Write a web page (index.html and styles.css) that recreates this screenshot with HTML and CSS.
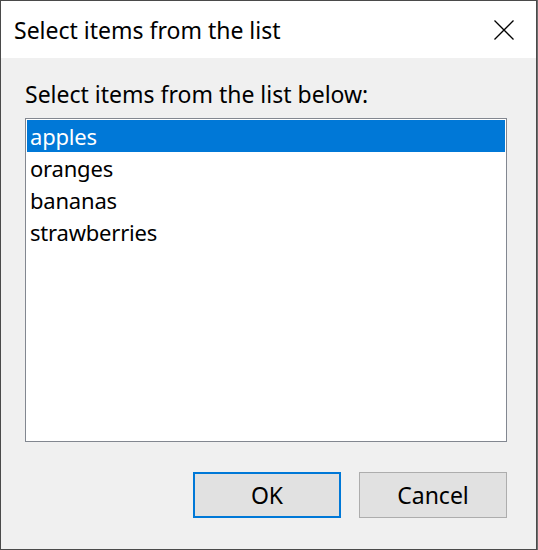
FILE: index.html
```html
<!DOCTYPE html>
<html>
<head>
<meta charset="utf-8">
<link rel="stylesheet" href="styles.css">
</head>
<body>
<div class="window">
  <div class="titlebar">
    <span class="title">Select items from the list</span>
    <span class="close">
      <svg width="20" height="20" viewBox="0 0 20 20"><path d="M0.5 0.5 L19.5 19.5 M19.5 0.5 L0.5 19.5" stroke="#000" stroke-width="1.3" fill="none"/></svg>
    </span>
  </div>
  <div class="content">
    <div class="label">Select items from the list below:</div>
    <div class="listbox">
      <div class="item selected">apples</div>
      <div class="item">oranges</div>
      <div class="item">bananas</div>
      <div class="item">strawberries</div>
    </div>
    <div class="buttons">
      <button class="btn default">OK</button>
      <button class="btn">Cancel</button>
    </div>
  </div>
</div>
</body>
</html>
```

FILE: styles.css
```css
html, body {
  margin: 0;
  padding: 0;
}
body {
  width: 538px;
  height: 550px;
  background: #6e6e6e;
  font-family: "Noto Sans", "Open Sans", sans-serif;
  color: #000;
}
.window {
  box-sizing: border-box;
  width: 537px;
  height: 550px;
  border: 1px solid #4a4a4a;
  background: #f0f0f0;
  display: flex;
  flex-direction: column;
}
.titlebar {
  height: 57px;
  background: #fff;
  display: flex;
  align-items: center;
  justify-content: space-between;
  padding: 0 22px 0 13px;
}
.title {
  font-size: 23px;
  line-height: 30px;
}
.close {
  display: flex;
  width: 20px;
  height: 20px;
}
.content {
  padding: 21px 0 0 24px;
}
.label {
  font-size: 23px;
  line-height: 30px;
  height: 39px;
}
.listbox {
  box-sizing: border-box;
  width: 482px;
  height: 324px;
  border: 1px solid #828790;
  background: #fff;
  padding: 1px;
}
.item {
  height: 32px;
  line-height: 32px;
  padding-left: 3px;
  font-size: 22px;
  letter-spacing: -0.2px;
}
.item.selected {
  background: #0078d7;
  color: #fff;
}
.buttons {
  width: 482px;
  display: flex;
  justify-content: flex-end;
  gap: 18px;
  margin-top: 30px;
}
.btn {
  box-sizing: border-box;
  width: 148px;
  height: 46px;
  background: #e1e1e1;
  border: 1px solid #adadad;
  font-family: "Noto Sans", "Open Sans", sans-serif;
  font-size: 23px;
  color: #000;
  padding: 0;
  margin: 0;
}
.btn.default {
  border: 2px solid #0078d7;
}
```
